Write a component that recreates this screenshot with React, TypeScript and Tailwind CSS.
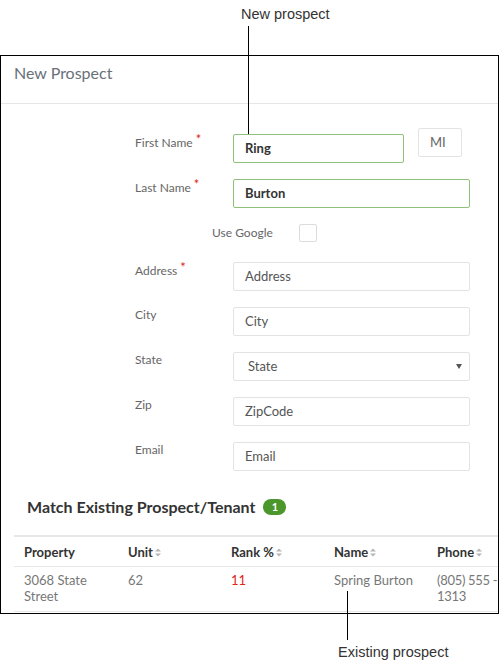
const font = { fontFamily: "Lato, 'Open Sans', sans-serif" };

const fields = [
  { label: "Address", required: true, placeholder: "Address" },
  { label: "City", required: false, placeholder: "City" },
  { label: "State", required: false, placeholder: "State", select: true },
  { label: "Zip", required: false, placeholder: "ZipCode" },
  { label: "Email", required: false, placeholder: "Email" },
];

function SortIcon() {
  return (
    <svg width="6" height="9" viewBox="0 0 6 9" className="ml-[2px] inline-block">
      <path d="M0 3.5 L3 0.5 L6 3.5 Z" fill="#b5b5b5" />
      <path d="M0 5.5 L3 8.5 L6 5.5 Z" fill="#b5b5b5" />
    </svg>
  );
}

function Label({ text, required }: { text: string; required?: boolean }) {
  return (
    <div className="w-[98px] shrink-0 text-[12px] leading-[16px] text-[#666]">
      {text}
      {required && <span className="relative -top-[3px] ml-[3px] text-[13px] text-[#d9261c]">*</span>}
    </div>
  );
}

export default function App() {
  return (
    <div className="relative h-[666px] w-[500px] overflow-hidden bg-white" style={font}>
      <div
        className="h-[55px] pl-[241px] pt-[5px] text-[14.5px] leading-[18px] text-[#333]"
        style={{ fontFamily: "'Liberation Sans', Arial, sans-serif" }}
      >
        New prospect
      </div>

      <div className="h-[559px] w-[499px] overflow-hidden border border-black">
        <div className="h-[48px] border-b border-[#e6e6e6] pl-[13px] pt-[7px] text-[16px] leading-[20px] text-[#6a7079]">
          New Prospect
        </div>

        <div className="flex flex-col pl-[134px]">
          <div className="mt-[24px] flex items-start">
            <div className="mt-[6px]">
              <Label text="First Name" required />
            </div>
            <div className="mt-[6px] flex h-[29px] w-[171px] items-center rounded-[2px] border border-[#8ec07a] pl-[11px] text-[13px] font-bold text-[#333]">
              Ring
            </div>
            <div className="ml-[14px] flex h-[29px] w-[44px] items-center rounded-[2px] border border-[#e3e3e3] pl-[11px] text-[13px] text-[#666]">
              MI
            </div>
          </div>

          <div className="mt-[16px] flex items-start">
            <Label text="Last Name" required />
            <div className="flex h-[29px] w-[237px] items-center rounded-[2px] border border-[#8ec07a] pl-[11px] text-[13px] font-bold text-[#333]">
              Burton
            </div>
          </div>

          <div className="mt-[16px] flex items-center pl-[77px]">
            <div className="w-[87px] text-[12px] leading-[16px] text-[#666]">Use Google</div>
            <div className="h-[18px] w-[18px] rounded-[2px] border border-[#dcdcdc]" />
          </div>

          <div className="flex flex-col gap-[16px] pt-[20px]">
            {fields.map((f) => (
              <div key={f.label} className="flex items-start">
                <Label text={f.label} required={f.required} />
                <div className="flex h-[29px] w-[237px] items-center justify-between rounded-[2px] border border-[#e3e3e3] pl-[11px] pr-[7px] text-[13px] text-[#555]">
                  <span className={f.select ? "pl-[3px]" : ""}>{f.placeholder}</span>
                  {f.select && (
                    <svg width="6" height="5" viewBox="0 0 6 5">
                      <path d="M0 0 L6 0 L3 5 Z" fill="#555" />
                    </svg>
                  )}
                </div>
              </div>
            ))}
          </div>
        </div>

        <div className="mt-[24px] flex items-center pl-[26px]">
          <span className="text-[16px] font-bold leading-[24px] text-[#333]">
            Match Existing Prospect/Tenant
          </span>
          <span className="ml-[8px] flex h-[16px] w-[23px] items-center justify-center rounded-full bg-[#4b972c] text-[11px] font-bold text-white">
            1
          </span>
        </div>

        <div className="ml-[13px] mt-[16px] w-[540px] text-[13px] leading-[16px]">
          <div className="grid grid-cols-[104px_103px_103px_103px_127px] border-b border-t-2 border-[#e8e8e8] pb-[6px] pt-[7px] font-bold text-[#333]">
            <div className="pl-[10px]">Property</div>
            <div className="flex items-center pl-[10px]">
              Unit
              <SortIcon />
            </div>
            <div className="flex items-center pl-[10px]">
              Rank %
              <SortIcon />
            </div>
            <div className="flex items-center pl-[10px]">
              Name
              <SortIcon />
            </div>
            <div className="flex items-center pl-[10px]">
              Phone
              <SortIcon />
            </div>
          </div>
          <div className="grid grid-cols-[104px_103px_103px_103px_127px] border-b border-[#e8e8e8] pb-[7px] pt-[5px] text-[#777]">
            <div className="pl-[10px]">
              3068 State
              <br />
              Street
            </div>
            <div className="pl-[10px]">62</div>
            <div className="pl-[10px] text-[#e0241b]">11</div>
            <div className="pl-[10px]">Spring Burton</div>
            <div className="pl-[10px] tracking-[-0.3px]">
              (805) 555 -
              <br />
              1313
            </div>
          </div>
        </div>
      </div>

      <div
        className="pl-[338px] pt-[29px] text-[14.5px] leading-[18px] text-[#333]"
        style={{ fontFamily: "'Liberation Sans', Arial, sans-serif" }}
      >
        Existing prospect
      </div>

      <div className="absolute left-[248px] top-[26px] h-[108px] w-px bg-black" />
      <div className="absolute left-[347px] top-[591px] h-[49px] w-px bg-black" />
    </div>
  );
}
